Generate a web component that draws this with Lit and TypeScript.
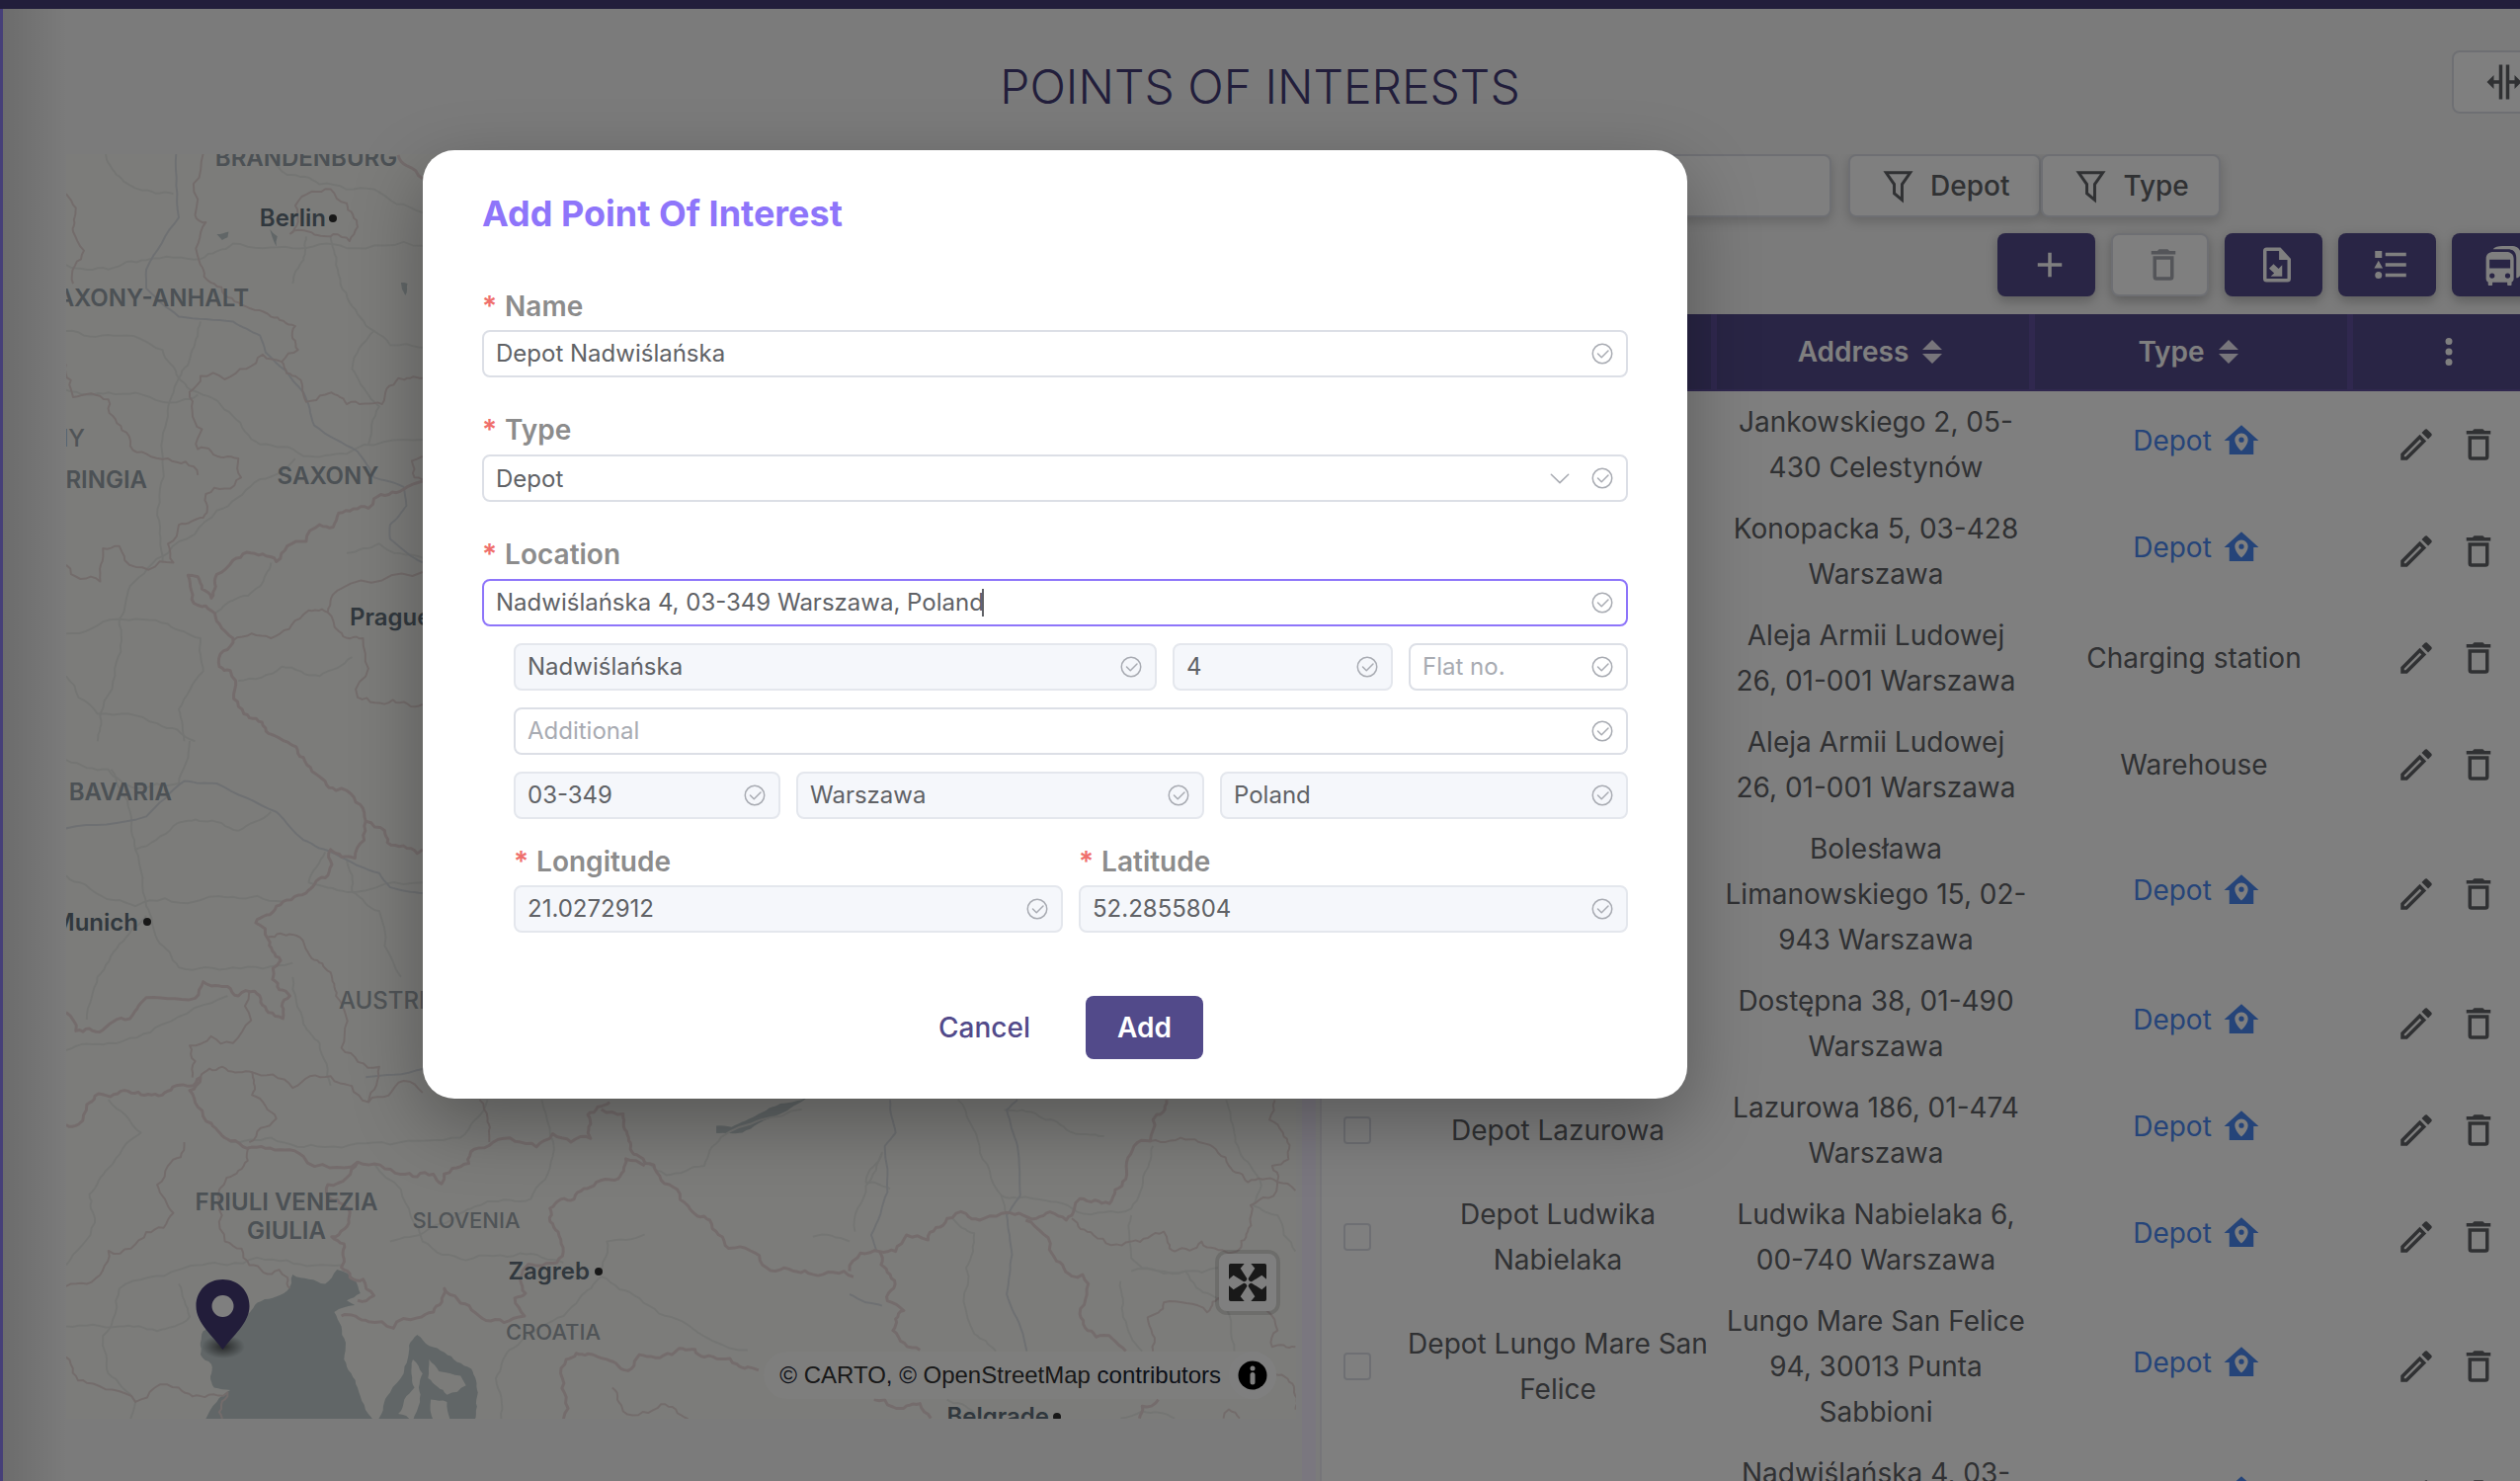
import { LitElement, html, css, svg, nothing } from "lit";
import { customElement } from "lit/decorators.js";

type Pt = [number, number];
type Sheet = { x: number; y: number; sx: number; sy: number };

/* The outline data is digitised on three sheets, each with its own origin and scale. */
const NORTH: Sheet = { x: 0, y: 0, sx: 0.5485, sy: 0.4785 };
const SOUTH: Sheet = { x: 0, y: 750, sx: 0.5485, sy: 0.4778 };
const EAST: Sheet = { x: 860, y: 1000, sx: 0.5485, sy: 0.3333 };

function points(sheet: Sheet, data: string): Pt[] {
  return data.split(" ").map((pair) => {
    const [a, b] = pair.split(",").map(Number);
    return [sheet.x + a * sheet.sx, sheet.y + b * sheet.sy] as Pt;
  });
}

/* Midpoint displacement with a fixed seed, so that borders look natural and stable. */
function line(sheet: Sheet, data: string, rough = 0.16, closed = false): string {
  let pts = points(sheet, data);
  let seed = pts.length * 7919 + Math.round(pts[0][0] * 31 + pts[0][1]);
  const rnd = () => {
    seed = (seed * 1103515245 + 12345) % 2147483648;
    return seed / 2147483648 - 0.5;
  };
  for (let pass = 0; pass < 3; pass++) {
    const next: Pt[] = [pts[0]];
    for (let i = 1; i < pts.length; i++) {
      const [x0, y0] = pts[i - 1];
      const [x1, y1] = pts[i];
      const dx = x1 - x0;
      const dy = y1 - y0;
      if (Math.hypot(dx, dy) > 6) {
        const k = rnd() * rough * 2;
        next.push([(x0 + x1) / 2 - dy * k, (y0 + y1) / 2 + dx * k]);
      }
      next.push([x1, y1]);
    }
    pts = next;
  }
  return "M" + pts.map(([x, y]) => `${x.toFixed(1)},${y.toFixed(1)}`).join("L") + (closed ? "Z" : "");
}

const COUNTRIES: [Sheet, string][] = [
  [NORTH, "735,328 750,350 780,378"],
  [NORTH, "780,1018 745,1035 690,1055 680,1075 625,1085 615,1115 590,1110 565,1145 530,1155 510,1188 485,1172 430,1185 400,1215 390,1265 365,1220 347,1217 365,1280 405,1320 430,1350 405,1410 435,1440 450,1510 490,1540 525,1568"],
  [SOUTH, "525,0 560,35 600,85 620,105 640,105 665,135 675,170 710,190 715,215 745,222 770,238 780,230"],
  [SOUTH, "675,170 672,210 655,248 610,230 600,290 565,322 510,350 472,385 495,420 518,465 503,505 535,540 522,588 495,575 470,530 440,540 420,520 375,510 360,545 260,555 245,580 215,590 190,612 140,614 122,575"],
  [SOUTH, "122,813 145,812 160,770 175,752 230,740 280,750 325,730 370,713 350,740 365,775 390,810 425,847 490,863 560,880 660,892 740,918 800,918 815,938 835,905 865,895 875,865 910,850 990,860 1020,832 1090,842 1085,792 1125,765"],
  [SOUTH, "1110,780 1150,790 1160,840 1180,880 1220,930 1250,950 1270,985 1310,1015 1345,1075 1385,1080 1440,1120 1500,1130 1575,1135"],
  [SOUTH, "660,892 640,925 605,940 610,970 645,1005 612,1050 635,1065 630,1115 670,1140 690,1175 660,1185"],
  [SOUTH, "1190,900 1155,885 1135,930 1100,935 1060,970 1015,990 1030,1040 1028,1105 975,1108 960,1140 970,1170 950,1180 968,1218 930,1232 870,1205 820,1160 800,1210 770,1222 680,1230 630,1218"],
  [SOUTH, "1040,1436 1045,1390 1038,1350 1045,1310 1085,1298 1120,1310 1165,1330 1180,1300 1240,1300 1260,1287 1300,1305 1360,1320 1400,1333"],
  [EAST, "585,340 560,400 555,465 525,480 510,580 480,655 425,640 415,670 400,705 370,680 345,700 280,685 240,705 215,685 180,700 145,765 105,750 85,800 55,800 20,805 0,860"],
  [EAST, "55,800 75,870 70,950 100,980 80,1040 130,1100"],
  [EAST, "325,705 375,810 410,875 430,870 425,990 455,1060 485,1065 510,1103"],
  [EAST, "45,1250 80,1272 130,1262 150,1307"],
  [EAST, "570,1250 540,1270 535,1307"],
];

const STATES: [Sheet, string][] = [
  [NORTH, "375,325 360,455 380,470 370,560 395,600 440,640 500,670 545,690 550,740 520,765 485,750 455,780 370,795 355,870 365,950 390,955 440,970 445,1010 380,1045 375,1095 330,1110 310,1150 320,1190 230,1185 220,1155 190,1160 185,1230 122,1195"],
  [NORTH, "122,410 140,440 135,490 155,530 135,600"],
  [NORTH, "520,765 550,800 565,850 600,835 640,855 705,855 735,800 780,800"],
  [NORTH, "122,770 135,840 200,845 225,910 270,960 310,970 365,1005"],
  [NORTH, "535,495 550,470 545,435 575,405 610,400 640,430 660,480 645,510 615,495 570,490 535,495"],
  [NORTH, "780,965 760,975 765,1010 780,1015"],
  [NORTH, "430,1355 500,1350 560,1300 605,1295 630,1245 780,1210"],
  [NORTH, "605,1295 625,1335 670,1350 660,1475 725,1480 780,1490"],
  [SOUTH, "495,415 540,410 575,460 610,490 620,540 630,650 700,690 680,765 745,720 780,745"],
  [SOUTH, "370,713 410,690 460,700 540,735 610,710 680,765"],
  [SOUTH, "460,530 430,640 350,645 355,713"],
  [SOUTH, "465,700 465,750 510,800 460,850"],
  [SOUTH, "340,850 310,900 290,940 320,1000 270,1040 200,1080 160,1150 122,1155"],
  [SOUTH, "460,860 440,910 405,950 415,1060 460,1110 515,1120 535,1160"],
  [SOUTH, "885,760 900,800 903,850"],
  [SOUTH, "122,1305 160,1360 250,1400 330,1370 385,1385 420,1380 410,1436"],
  [SOUTH, "1130,1370 1150,1420 1220,1405 1270,1436"],
  [EAST, "555,465 630,460 680,500 700,540 735,590 790,590 823,615"],
  [EAST, "785,340 775,400 800,440 810,520 780,540 790,585 740,660 735,740 715,800 700,805 650,770 600,800 580,740 520,770 450,750 410,700"],
  [EAST, "690,940 660,985 580,955 550,1000 560,1103"],
  [EAST, "770,980 790,1040 780,1090 823,1090"],
  [EAST, "780,1170 820,1210 823,1280"],
  [EAST, "690,1307 700,1280 720,1307"],
];

const ROADS: [Sheet, string][] = [
  [NORTH, "195,325 215,370 255,400 320,410"],
  [NORTH, "122,560 200,570 270,550 370,548 430,515 540,525 640,525 780,520"],
  [NORTH, "500,325 530,370 590,390 690,400 780,450"],
  [NORTH, "610,500 620,560 645,640 690,700 720,730 780,735"],
  [NORTH, "565,500 560,550 540,600"],
  [NORTH, "122,700 210,710 300,740 330,800 365,830 430,880 480,940 560,965 640,960 780,930"],
  [NORTH, "122,825 200,830 300,850 365,835"],
  [NORTH, "370,680 355,740 330,800 310,880 300,980 290,1090 300,1190"],
  [NORTH, "545,970 470,1020 400,1080 310,1170 240,1240 220,1310 215,1400 185,1510 180,1568"],
  [NORTH, "122,1340 215,1310 310,1320 370,1350 375,1420 330,1500 340,1568"],
  [NORTH, "500,1190 480,1240 430,1270 395,1300"],
  [NORTH, "640,1170 700,1150 780,1180"],
  [NORTH, "440,1440 520,1410 590,1430 650,1390"],
  [NORTH, "122,1430 180,1510 290,1530 360,1568"],
  [NORTH, "690,700 650,780 700,860 680,940"],
  [SOUTH, "122,40 200,60 250,100 330,90 350,0"],
  [SOUTH, "205,60 240,150 250,230 270,350 290,420 330,480 430,480 540,470"],
  [SOUTH, "122,285 190,330 250,350 360,340 430,330 520,340"],
  [SOUTH, "250,230 320,180 375,170 440,190 500,150"],
  [SOUTH, "270,370 220,430 180,500 160,590"],
  [SOUTH, "600,235 570,300 640,320 780,300"],
  [SOUTH, "540,500 560,600 590,640 610,730"],
  [SOUTH, "640,250 650,320 700,360 740,500"],
  [SOUTH, "122,655 200,640 300,600 420,540"],
  [SOUTH, "200,760 260,830 200,905 165,960 175,1020 122,1110"],
  [SOUTH, "425,850 500,840 600,860 720,855 850,840 900,760"],
  [SOUTH, "690,895 740,950 780,1060 860,1100 960,1085 1040,1105"],
  [SOUTH, "720,1060 790,1035 850,1000 900,975 980,970 1020,880 1000,760"],
  [SOUTH, "1110,1135 1070,1180 1000,1240 940,1290 915,1350 925,1436"],
  [SOUTH, "1110,1135 1180,1180 1260,1230 1380,1290"],
  [SOUTH, "1110,1120 1120,1060 1190,1045"],
  [SOUTH, "1190,890 1230,920 1300,900 1330,840 1480,780"],
  [SOUTH, "122,1240 220,1240 290,1250 350,1220 330,1150"],
  [SOUTH, "240,1440 250,1400 200,1340 190,1260 220,1160 330,1120 420,1110 530,1100 630,1110"],
  [SOUTH, "1500,1050 1568,1060"],
  [EAST, "200,340 240,480 280,630 290,690"],
  [EAST, "285,370 350,390 400,430 470,450"],
  [EAST, "280,630 340,640 420,680 520,670 545,560 560,480"],
  [EAST, "190,700 230,745 215,850 230,1050 270,1103"],
  [EAST, "695,340 710,440 740,540 760,600 745,660 790,690 823,800"],
  [EAST, "520,690 520,820 540,850 620,860 680,850"],
  [EAST, "520,860 620,860 640,910 690,960 710,1103"],
  [EAST, "500,890 505,1000 540,1103"],
  [EAST, "10,740 30,600 60,500 30,590 75,610"],
  [EAST, "180,1250 230,1290 200,1307"],
  [EAST, "500,1307 540,1285 600,1307"],
];

const RAILS: [Sheet, string][] = [
  [NORTH, "325,325 330,460 270,570 270,610 330,670 430,680 480,710 490,745 560,830 580,900 660,955 690,1010 745,1030 750,1070 720,1110 720,1140 780,1190"],
  [SOUTH, "122,185 270,160 340,85 400,90 510,150 560,210 620,240 700,280 720,310 780,322"],
  [SOUTH, "675,712 780,695"],
  [EAST, "75,340 85,440 65,480 70,620 40,750 50,800"],
  [EAST, "310,340 290,370 310,480 315,630 290,690 300,810 290,930 320,1050 327,1103"],
  [EAST, "0,930 30,955 60,965"],
];

const LABELS: { t: string; x: number; y: number; kind: string; end?: boolean; mid?: boolean }[] = [
  { t: "BRANDENBURG", x: 310, y: 168, kind: "region", mid: true },
  { t: "SAXONY-ANHALT", x: 252, y: 310, kind: "region", end: true },
  { t: "GERMANY", x: 86, y: 452, kind: "country", end: true },
  { t: "THURINGIA", x: 149, y: 494, kind: "region", end: true },
  { t: "SAXONY", x: 332, y: 490, kind: "region", mid: true },
  { t: "BAVARIA", x: 174, y: 810, kind: "region", end: true },
  { t: "AUSTRIA", x: 343, y: 1021, kind: "country" },
  { t: "FRIULI VENEZIA", x: 290, y: 1225, kind: "region", mid: true },
  { t: "GIULIA", x: 290, y: 1254, kind: "region", mid: true },
  { t: "SLOVENIA", x: 472, y: 1243, kind: "country small", mid: true },
  { t: "CROATIA", x: 560, y: 1356, kind: "country small", mid: true },
  { t: "Berlin", x: 330, y: 229, kind: "city", end: true },
  { t: "Prague", x: 354, y: 633, kind: "city" },
  { t: "Munich", x: 140, y: 942, kind: "city", end: true },
  { t: "Zagreb", x: 597, y: 1295, kind: "city", end: true },
  { t: "Belgrade", x: 1062, y: 1442, kind: "city", end: true },
];
const DOTS: Pt[] = [[337, 221], [149, 933], [606, 1287], [1070, 1434]];

@customElement("poi-map")
export class PoiMap extends LitElement {
  static styles = css`
    :host { display: block; position: relative; overflow: hidden; background: #f9f9f4; }
    .canvas { display: block; position: absolute; inset: 0; width: 100%; height: 100%; font-family: Inter, "Liberation Sans", sans-serif; }
    .line { fill: none; stroke-linejoin: round; }
    .country-line { stroke: #e9d8d8; stroke-width: 3; }
    .state-line { stroke: #e6d8d7; stroke-width: 2; }
    .road { stroke: #e9eae7; stroke-width: 2; }
    .rail { stroke: #dde0e5; stroke-width: 2; }
    .water { fill: #c2cdcf; }
    .land { fill: #f9f9f4; }
    .region { font-size: 24px; font-weight: 600; fill: #98a3aa; }
    .country { font-size: 24px; font-weight: 500; fill: #a0a8ae; }
    .small { font-size: 22px; }
    .city { font-size: 24px; font-weight: 600; fill: #62717c; }
    .dot { fill: #303030; }
    .full { position: absolute; right: 16px; bottom: 105px; box-sizing: border-box; width: 66px; height: 66px; padding: 10px; border: 4px solid rgba(0, 0, 0, 0.12); border-radius: 12px; background: #fff; background-clip: padding-box; color: #333; }
    .full svg { display: block; width: 38px; height: 38px; }
    .credit { position: absolute; right: 20px; bottom: 20px; display: flex; align-items: center; gap: 8px; height: 48px; padding-left: 16px; border-radius: 24px; background: rgba(255, 255, 255, 0.5); font: 24px/48px "Liberation Sans", Arial, sans-serif; color: #1b2433; }
    .credit a { color: #333; text-decoration: none; }
    .info { width: 48px; height: 48px; padding: 0; border: 0; border-radius: 24px; background: #fff; }
    .info svg { display: block; width: 48px; height: 48px; }
  `;

  render() {
    const draw = (set: [Sheet, string][], cls: string, rough: number) =>
      set.map(([s, d]) => svg`<path class="line ${cls}" d=${line(s, d, rough)} />`);
    const arrow = "M5,0H47L35,14L55,45Q55,54 45,55L14,35L0,47V5Q0,0 5,0Z";
    return html`
      <svg class="canvas" viewBox="67 156 1245 1280" preserveAspectRatio="xMinYMin slice" role="img" aria-label="Map">
        <path class="water" d=${line(SOUTH, "378,1440 400,1400 425,1375 395,1370 390,1320 370,1300 375,1250 440,1225 475,1190 530,1165 540,1130 570,1140 600,1150 622,1120 655,1140 665,1170 640,1185 655,1195 617,1210 630,1240 635,1310 660,1370 690,1440", 0.1, true)} />
        <path class="water" d=${line(SOUTH, "697,1440 720,1380 745,1340 755,1280 770,1258 820,1295 870,1330 882,1380 875,1440", 0.1, true)} />
        <path class="land" d=${line(SOUTH, "762,1310 780,1340 775,1400 762,1440 735,1425 765,1370 762,1310", 0.1, true)} />
        <path class="land" d=${line(SOUTH, "792,1310 810,1335 850,1345 860,1365 825,1385 790,1350 792,1310", 0.1, true)} />
        <path class="land" d=${line(SOUTH, "795,1395 825,1400 830,1436 800,1440 795,1395", 0.1, true)} />
        <path class="water" d=${line(SOUTH, "1322,815 1350,818 1400,790 1440,768 1490,755 1440,790 1400,810 1370,830 1322,831", 0.05, true)} />
        <path class="water" d=${line(NORTH, "400,495 422,490 420,502 410,508", 0.1, true)} />
        <path class="water" d=${line(NORTH, "498,485 512,500 510,522 502,500", 0.1, true)} />
        <path class="water" d=${line(NORTH, "740,598 752,600 748,625 742,612", 0.1, true)} />
        ${draw(ROADS, "road", 0.1)} ${draw(RAILS, "rail", 0.04)}
        ${draw(STATES, "state-line", 0.2)} ${draw(COUNTRIES, "country-line", 0.2)}
        ${LABELS.map((l) => svg`<text class=${l.kind} x=${l.x} y=${l.y} text-anchor=${l.end ? "end" : l.mid ? "middle" : "start"}>${l.t}</text>`)}
        ${DOTS.map(([x, y]) => svg`<circle class="dot" cx=${x} cy=${y} r="4" />`)}
        <defs>
          <radialGradient id="shade"><stop offset="0" stop-color="#000" stop-opacity=".6" /><stop offset="1" stop-color="#000" stop-opacity="0" /></radialGradient>
        </defs>
        <ellipse cx="226" cy="1363" rx="22" ry="12" fill="url(#shade)" />
        <path fill="#443a74" fill-rule="evenodd" d="M225.500,1295c-15,0-27,11-27,27c0,17 17,30 27,44c10,-14 27,-27 27,-44c0,-16-12,-27-27,-27Z" />
        <circle cx="225.500" cy="1322" r="11" fill="#fff" />
      </svg>
      <button class="full" aria-label="Full screen">
        <svg viewBox="0 0 114 114" fill="currentColor">
          <path d=${arrow} /><path transform="translate(114 0) scale(-1 1)" d=${arrow} />
          <path transform="translate(0 114) scale(1 -1)" d=${arrow} /><path transform="translate(114 114) scale(-1 -1)" d=${arrow} />
        </svg>
      </button>
      <div class="credit">
        <span>© <a href="#carto">CARTO</a>, © <a href="#osm">OpenStreetMap</a> contributors</span>
        <button class="info" aria-label="Attribution">
          <svg viewBox="0 0 48 48"><circle cx="24" cy="24" r="14.500" /><circle cx="24" cy="17" r="2.500" fill="#fff" /><path d="M24,23.500V31" stroke="#fff" stroke-width="5" stroke-linecap="round" /></svg>
        </button>
      </div>
    `;
  }
}

const ICONS = {
  split: "M18,16V13H15V22H13V2H15V11H18V8L22,12L18,16M2,12L6,16V13H9V22H11V2H9V11H6V8L2,12Z",
  plus: "M19,13H13V19H11V13H5V11H11V5H13V11H19V13Z",
  trash: "M6,19A2,2 0 0,0 8,21H16A2,2 0 0,0 18,19V7H6V19M8,9H16V19H8V9M15.5,4L14.5,3H9.5L8.5,4H5V6H19V4H15.5Z",
  pencil: "M14.06,9L15,9.94L5.92,19H5V18.08L14.06,9M17.66,3C17.41,3 17.15,3.1 16.96,3.29L15.13,5.12L18.88,8.87L20.71,7.04C21.1,6.65 21.1,6 20.71,5.63L18.37,3.29C18.17,3.09 17.92,3 17.66,3M14.06,6.19L3,17.25V21H6.75L17.81,9.94L14.06,6.19Z",
  file: "M6,2H14L20,8.500V20A2,2 0 0,1 18,22H6A2,2 0 0,1 4,20V4A2,2 0 0,1 6,2M6,4V20H18V9.200H13.200V4H6M10,11.600L12.900,14.300L15,12.200V18.700H8.300L10.400,16.800L7.400,14.100Z",
  list: "M5,9.5L7.5,14H2.5L5,9.5M3,4H7V8H3V4M5,20A2,2 0 0,0 7,18A2,2 0 0,0 5,16A2,2 0 0,0 3,18A2,2 0 0,0 5,20M9,5V7H21V5H9M9,19H21V17H9V19M9,13H21V11H9V13Z",
  bus: "M6,4.600H13C16,4.600 17.500,6 17.500,8.500V20C17.500,21 17,21.700 16.300,22V23.200A.9,.9 0 0,1 13.800,23.200V22.200H5.200V23.200A.9,.9 0 0,1 2.700,23.200V22C2,21.700 1.500,21 1.500,20V8.500C1.500,6 3,4.600 6,4.600M3.500,9V14H15.500V9H3.500M5,16.800A1.500,1.500 0 0,0 5,19.800A1.500,1.500 0 0,0 5,16.800M14,16.800A1.500,1.500 0 0,0 14,19.800A1.500,1.500 0 0,0 14,16.800M5.500,3C6.500,1.600 8.500,1.100 11,1.100H16C20,1.100 21.500,3 21.500,6V17C21.500,18.500 20.500,19.500 19,19.600V8C19,4.500 17,3 14,3Z",
  home: "M12,3L2,12H5V20H19V12H22L12,3M12,7.7C14.1,7.7 15.8,9.4 15.8,11.5C15.8,14.5 12,18 12,18C12,18 8.2,14.5 8.2,11.5C8.2,9.4 9.9,7.7 12,7.7M12,10A1.5,1.5 0 0,0 10.5,11.5A1.5,1.5 0 0,0 12,13A1.5,1.5 0 0,0 13.5,11.5A1.5,1.5 0 0,0 12,10Z",
  dots: "M12,16A2,2 0 0,1 14,18A2,2 0 0,1 12,20A2,2 0 0,1 10,18A2,2 0 0,1 12,16M12,10A2,2 0 0,1 14,12A2,2 0 0,1 12,14A2,2 0 0,1 10,12A2,2 0 0,1 12,10M12,4A2,2 0 0,1 14,6A2,2 0 0,1 12,8A2,2 0 0,1 10,6A2,2 0 0,1 12,4Z",
};
const icon = (name: keyof typeof ICONS) =>
  html`<svg class="icon" viewBox="0 0 24 24" aria-hidden="true"><path fill="currentColor" fill-rule="evenodd" d=${ICONS[name]} /></svg>`;
const funnel = html`<svg class="funnel" viewBox="250 390 94 106" aria-hidden="true"><path d="M260,401.500H334L309,437V485L285,465V437Z" fill="none" stroke="currentColor" stroke-width="9" /></svg>`;
const sorter = html`<svg class="sorter" viewBox="0 0 20 24" aria-hidden="true"><path fill="currentColor" d="M10,0L20,10H0ZM0,14H20L10,24Z" /></svg>`;
const check = html`<svg class="check" viewBox="0 0 1024 1024" aria-hidden="true"><path fill="currentColor" d="M512 896a384 384 0 1 0 0-768 384 384 0 0 0 0 768m0 64a448 448 0 1 1 0-896 448 448 0 0 1 0 896" /><path fill="currentColor" d="M745.344 361.344a32 32 0 0 1 45.312 45.312l-288 288a32 32 0 0 1-45.312 0l-160-160a32 32 0 1 1 45.312-45.312L480 626.752z" /></svg>`;
const chevron = html`<svg class="chevron" viewBox="0 0 1024 1024" aria-hidden="true"><path fill="currentColor" d="M831.872 340.864 512 652.672 192.128 340.864a30.592 30.592 0 0 0-42.752 0 29.12 29.12 0 0 0 0 41.6L489.664 714.24a32 32 0 0 0 44.672 0l340.288-331.712a29.12 29.12 0 0 0 0-41.728 30.592 30.592 0 0 0-42.752 0z" /></svg>`;

/* Rows whose name cell lies under the dialog carry only their address lines. */
const ROWS: { name?: string[]; address: string[]; type: string }[] = [
  { address: ["Jankowskiego 2, 05-", "430 Celestynów"], type: "Depot" },
  { address: ["Konopacka 5, 03-428", "Warszawa"], type: "Depot" },
  { address: ["Aleja Armii Ludowej", "26, 01-001 Warszawa"], type: "Charging station" },
  { address: ["Aleja Armii Ludowej", "26, 01-001 Warszawa"], type: "Warehouse" },
  { address: ["Bolesława", "Limanowskiego 15, 02-", "943 Warszawa"], type: "Depot" },
  { address: ["Dostępna 38, 01-490", "Warszawa"], type: "Depot" },
  { name: ["Depot Lazurowa"], address: ["Lazurowa 186, 01-474", "Warszawa"], type: "Depot" },
  { name: ["Depot Ludwika", "Nabielaka"], address: ["Ludwika Nabielaka 6,", "00-740 Warszawa"], type: "Depot" },
  { name: ["Depot Lungo Mare San", "Felice"], address: ["Lungo Mare San Felice", "94, 30013 Punta", "Sabbioni"], type: "Depot" },
  { address: ["Nadwiślańska 4, 03-", "349 Warszawa"], type: "Depot" },
];
const lines = (parts?: string[]) => parts?.map((p, i) => html`${i ? html`<br />` : nothing}${p}`) ?? nothing;

@customElement("app-root")
export class AppRoot extends LitElement {
  static styles = css`
    :host { display: block; position: relative; height: 100vh; overflow: hidden; background: #f6f6f6; font: 28px/46px Inter, "Liberation Sans", sans-serif; color: #606266; }
    * { box-sizing: border-box; }
    button, input, select { font: inherit; color: inherit; margin: 0; }
    button { cursor: pointer; }
    .page { display: flex; flex-direction: column; height: 100%; margin-right: -30px; }
    .top { flex: none; height: 9px; background: #443c76; }
    .edge { position: absolute; left: 0; top: 9px; bottom: 0; width: 3px; background: #463f78; z-index: 3; }
    .side { position: absolute; left: 3px; top: 9px; bottom: 0; width: 64px; background: linear-gradient(90deg, rgba(0, 0, 0, 0.12), transparent); }
    .head { display: grid; grid-template-columns: 1fr auto 1fr; height: 147px; padding-top: 42px; flex: none; }
    .title { grid-column: 2; margin: 5px 30px 0 0; font-size: 48px; line-height: 64px; font-weight: 300; color: #443c76; }
    .icon { display: block; width: 42px; height: 42px; }
    .btn { display: flex; align-items: center; justify-content: center; width: 99px; height: 64px; padding: 0 0 0 7px; border: 0; border-radius: 8px; background: #534a8a; color: #fff; box-shadow: 0 4px 12px rgba(0, 0, 0, 0.25); }
    .btn.plain { border: 2px solid #dcdfe6; background: #fff; color: #606266; }
    .btn.plain[disabled] { color: #a8abb2; }
    .btn.flat { justify-self: end; box-shadow: none; }
    .body { flex: 1; min-height: 0; display: flex; padding-left: 67px; }
    .map { flex: 1; height: 1280px; }
    .split { flex: none; width: 20px; margin-left: 6px; border-left: 14px solid #f4effe; border-right: 2px solid #eceaf3; }
    .panel { flex: none; width: 1243px; display: flex; flex-direction: column; overflow: hidden; }
    .filters { flex: none; display: flex; height: 64px; }
    .search { width: 516px; margin-right: 17px; padding: 0 16px; border: 2px solid #dcdfe6; border-radius: 8px; background: #fff; box-shadow: 0 4px 12px rgba(0, 0, 0, 0.18); }
    .filter { display: flex; align-items: center; gap: 17px; padding: 0 30px 0 33px; border: 2px solid #dcdfe6; border-radius: 8px; background: #fff; font-weight: 500; box-shadow: 0 4px 12px rgba(0, 0, 0, 0.18); }
    .funnel { width: 31px; height: 35px; }
    .tools { flex: none; display: flex; justify-content: flex-end; gap: 16px; padding: 16px 0 18px; }
    .sheet { flex: 1; margin-right: 5px; background: #fff; }
    .table { width: 100%; border-collapse: separate; border-spacing: 0; table-layout: fixed; text-align: center; }
    .c-check { width: 78px; }
    .c-text { width: 322px; }
    .table th { height: 78px; padding: 0; border-right: 6px solid #60519f; border-bottom: 2px solid #60519f; background: #534a8a; color: #fff; font-weight: 600; }
    .table th:last-child, .table th:first-child { border-right: 0; }
    .table td { padding: 8px 0; vertical-align: middle; }
    .th-in { display: flex; align-items: center; justify-content: center; gap: 14px; padding-right: 6px; }
    .sorter { width: 20px; height: 24px; color: #efeaf6; }
    .tick { display: block; appearance: none; width: 28px; height: 28px; margin: 0 auto 0 22px; border: 2px solid #dcdfe6; border-radius: 4px; background: #fff; }
    .link { display: flex; align-items: center; justify-content: center; gap: 9px; padding: 0 0 8px 7px; color: #4a88f2; text-decoration: none; }
    .acts { display: flex; justify-content: center; gap: 21px; padding-right: 4px; }
    .act { padding: 0; border: 0; background: none; }
    .dots .icon { margin: 0 auto; }

    .mask { position: absolute; inset: 0; z-index: 2; padding: 152px 0 0 428px; background: rgba(0, 0, 0, 0.5); }
    .dialog { width: 1280px; padding: 42px 60px 40px; border-radius: 32px; background: #fff; box-shadow: 0 24px 72px rgba(0, 0, 0, 0.3); }
    .dialog-title { margin: 0 0 54px; font-size: 36px; line-height: 44px; font-weight: 700; color: #8e75fa; }
    .field { display: flex; flex-direction: column; gap: 7px; margin-bottom: 35px; }
    .label { line-height: 36px; font-weight: 600; color: #8c8c8c; }
    .field:first-of-type { gap: 6px; }
    .req { margin-right: 8px; color: #ef6f6c; }
    .box { position: relative; display: flex; align-items: center; gap: 18px; height: 48px; padding-right: 12px; border: 2px solid #dcdfe6; border-radius: 8px; background: #fff; color: #a8abb2; }
    .box.fixed { background: #f5f7fb; border-color: #e4e7ed; }
    .box.active { border-color: #8e75fa; }
    .input { flex: 1; min-width: 0; width: 100%; height: 44px; padding: 0 0 0 12px; border: 0; outline: 0; background: none; appearance: none; font-size: 24px; color: #606266; }
    .input::placeholder { color: #a8abb2; opacity: 1; }
    .check { flex: none; width: 24px; height: 24px; }
    .chevron { flex: none; width: 26px; height: 26px; }
    .caret { position: absolute; left: 504px; top: 8px; width: 2px; height: 28px; background: #606266; }
    .located { margin-bottom: 17px; }
    .sub { display: grid; grid-template-columns: minmax(0, 1fr); gap: 17px; padding-left: 32px; }
    .row { display: grid; gap: 16px; }
    .street { grid-template-columns: minmax(0, 651fr) minmax(0, 223fr) minmax(0, 222fr); }
    .town { grid-template-columns: minmax(0, 270fr) minmax(0, 413fr) minmax(0, 413fr); }
    .coords { grid-template-columns: minmax(0, 1fr) minmax(0, 1fr); margin-top: 8px; }
    .coords .field { margin: 0; gap: 6px; }
    .foot { display: flex; justify-content: center; gap: 24px; margin-top: 64px; }
    .action { height: 64px; padding: 0 32px; border: 0; border-radius: 8px; background: none; font-weight: 500; color: #524a8a; }
    .action.primary { background: #524a8a; color: #fff; font-weight: 600; }
  `;

  private box(id: string, label: string, value: string, kind = "", hint = "") {
    return html`<div class="box ${kind}">
      <input class="input" id=${id} aria-label=${label} .value=${value} placeholder=${hint} ?readonly=${kind === "fixed"} />
      ${kind === "active" ? html`<span class="caret"></span>` : nothing}${check}
    </div>`;
  }

  private label(id: string, text: string) {
    return html`<label class="label" for=${id}><span class="req">*</span>${text}</label>`;
  }

  render() {
    return html`
      <div class="page">
        <div class="top"></div>
        <header class="head">
          <h1 class="title">POINTS OF INTERESTS</h1>
          <button class="btn plain flat" aria-label="Split view">${icon("split")}</button>
        </header>
        <main class="body">
          <poi-map class="map"></poi-map>
          <div class="split"></div>
          <section class="panel">
            <div class="filters">
              <input class="search" type="search" aria-label="Search" />
              <button class="filter">${funnel}Depot</button>
              <button class="filter">${funnel}Type</button>
            </div>
            <div class="tools">
              <button class="btn" aria-label="Add">${icon("plus")}</button>
              <button class="btn plain" aria-label="Delete" disabled>${icon("trash")}</button>
              <button class="btn" aria-label="Import">${icon("file")}</button>
              <button class="btn" aria-label="Types">${icon("list")}</button>
              <button class="btn" aria-label="Vehicles">${icon("bus")}</button>
            </div>
            <div class="sheet">
              <table class="table">
                <colgroup><col class="c-check" /><col class="c-text" /><col class="c-text" /><col class="c-text" /><col /></colgroup>
                <thead>
                  <tr>
                    <th></th><th></th>
                    <th><div class="th-in">Address${sorter}</div></th>
                    <th><div class="th-in">Type${sorter}</div></th>
                    <th class="dots">${icon("dots")}</th>
                  </tr>
                </thead>
                <tbody>
                  ${ROWS.map((r) => html`<tr>
                    <td><input class="tick" type="checkbox" aria-label="Select row" /></td>
                    <td>${lines(r.name)}</td>
                    <td>${lines(r.address)}</td>
                    <td>${r.type === "Depot" ? html`<a class="link" href="#depot">Depot${icon("home")}</a>` : r.type}</td>
                    <td><div class="acts">
                      <button class="act" aria-label="Edit">${icon("pencil")}</button>
                      <button class="act" aria-label="Delete">${icon("trash")}</button>
                    </div></td>
                  </tr>`)}
                </tbody>
              </table>
            </div>
          </section>
        </main>
      </div>
      <div class="side"></div>
      <div class="edge"></div>
      <div class="mask">
        <form class="dialog" role="dialog" aria-labelledby="dialog-title">
          <h2 class="dialog-title" id="dialog-title">Add Point Of Interest</h2>
          <div class="field">${this.label("name", "Name")}${this.box("name", "Name", "Depot Nadwiślańska")}</div>
          <div class="field">
            ${this.label("type", "Type")}
            <div class="box"><select class="input" id="type"><option>Depot</option></select>${chevron}${check}</div>
          </div>
          <div class="field located">
            ${this.label("location", "Location")}
            ${this.box("location", "Location", "Nadwiślańska 4, 03-349 Warszawa, Poland", "active")}
          </div>
          <div class="sub">
            <div class="row street">
              ${this.box("street", "Street", "Nadwiślańska", "fixed")} ${this.box("number", "Number", "4", "fixed")}
              ${this.box("flat", "Flat no.", "", "", "Flat no.")}
            </div>
            ${this.box("extra", "Additional", "", "", "Additional")}
            <div class="row town">
              ${this.box("zip", "Postal code", "03-349", "fixed")} ${this.box("city", "City", "Warszawa", "fixed")}
              ${this.box("country", "Country", "Poland", "fixed")}
            </div>
            <div class="row coords">
              <div class="field">${this.label("lng", "Longitude")}${this.box("lng", "Longitude", "21.0272912", "fixed")}</div>
              <div class="field">${this.label("lat", "Latitude")}${this.box("lat", "Latitude", "52.2855804", "fixed")}</div>
            </div>
          </div>
          <div class="foot">
            <button class="action" type="button">Cancel</button>
            <button class="action primary" type="button">Add</button>
          </div>
        </form>
      </div>
    `;
  }
}
